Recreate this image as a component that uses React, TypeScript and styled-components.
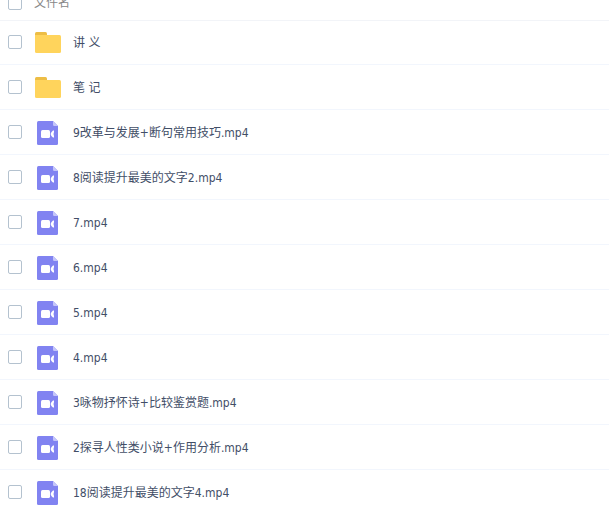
import React from "react";
import styled, { createGlobalStyle } from "styled-components";

const GlobalStyle = createGlobalStyle`
  *, *::before, *::after { box-sizing: border-box; }
  body {
    margin: 0;
    background: #fff;
    color: #424e67;
    font: 12px/18px "DejaVu Sans Condensed", "Noto Sans", "Noto Sans CJK SC", sans-serif;
  }
`;

const Viewport = styled.main`
  height: 100vh;
  overflow: hidden;
`;

const FileTable = styled.table`
  width: 100%;
  margin-top: -15px;
  border-collapse: separate;
  border-spacing: 0;
  table-layout: fixed;
`;

const HeadCell = styled.th<{ $check?: boolean }>`
  width: ${(p) => (p.$check ? "34px" : "auto")};
  height: 36px;
  padding: ${(p) => (p.$check ? "0 0 0 8px" : "0")};
  border-bottom: 1px solid #f2f4f8;
  color: #888;
  font-weight: 400;
  text-align: left;
  vertical-align: middle;
`;

const Cell = styled.td<{ $check?: boolean }>`
  height: 45px;
  padding: ${(p) => (p.$check ? "0 0 0 8px" : "0 8px 0 1px")};
  border-bottom: 1px solid #f2f6fd;
  vertical-align: middle;

  tr:first-child > & {
    height: 44px;
    padding-bottom: 1px;
  }
`;

const Checkbox = styled.input`
  display: block;
  appearance: none;
  width: 14px;
  height: 14px;
  margin: 0;
  border: 1px solid #b4c2cf;
  border-radius: 2px;
  background: #fff;

  &:checked {
    border-color: #8183f1;
    background: #8183f1;
  }
`;

const FileLabel = styled.label`
  display: flex;
  align-items: center;
  gap: 12px;
`;

const FileName = styled.span`
  padding-top: 2px;
`;

const Icon = styled.svg`
  display: block;
  flex: none;
  width: 26px;
  height: 26px;
`;

const FolderIcon = () => (
  <Icon viewBox="0 0 26 26" aria-hidden="true">
    <path d="M0 12V4.5Q0 3 1.5 3H10.5Q12 3 12 4.5V12Z" fill="#edbd45" />
    <path d="M0 6H24.5Q26 6 26 7.5V22.5Q26 24 24.5 24H1.5Q0 24 0 22.5Z" fill="#ffd45c" />
  </Icon>
);

const VideoIcon = () => (
  <Icon viewBox="0 0 26 26" aria-hidden="true">
    <path d="M3.5 2H18L23 7V24.5Q23 26 21.5 26H3.5Q2 26 2 24.5V3.5Q2 2 3.5 2Z" fill="#8183f1" />
    <path d="M18 2L23 7H19.2Q18 7 18 5.8Z" fill="#c4c5fa" />
    <rect x="6" y="11" width="9" height="8" rx="1.5" fill="#fff" />
    <path d="M15.6 15Q16 13 18 11.5H19V13L18.5 15L19 17V18.5H18Q16 17 15.6 15Z" fill="#fff" />
  </Icon>
);

type Entry = { name: string; folder?: boolean };

const entries: Entry[] = [
  { name: "讲 义", folder: true },
  { name: "笔 记", folder: true },
  { name: "9改革与发展+断句常用技巧.mp4" },
  { name: "8阅读提升最美的文字2.mp4" },
  { name: "7.mp4" },
  { name: "6.mp4" },
  { name: "5.mp4" },
  { name: "4.mp4" },
  { name: "3咏物抒怀诗+比较鉴赏题.mp4" },
  { name: "2探寻人性类小说+作用分析.mp4" },
  { name: "18阅读提升最美的文字4.mp4" },
];

export default function App() {
  return (
    <Viewport lang="zh-CN">
      <GlobalStyle />
      <FileTable>
        <thead>
          <tr>
            <HeadCell $check>
              <Checkbox type="checkbox" id="file-all" />
            </HeadCell>
            <HeadCell>
              <label htmlFor="file-all">文件名</label>
            </HeadCell>
          </tr>
        </thead>
        <tbody>
          {entries.map((entry, i) => (
            <tr key={entry.name}>
              <Cell $check>
                <Checkbox type="checkbox" id={`file-${i}`} />
              </Cell>
              <Cell>
                <FileLabel htmlFor={`file-${i}`}>
                  {entry.folder ? <FolderIcon /> : <VideoIcon />}
                  <FileName>{entry.name}</FileName>
                </FileLabel>
              </Cell>
            </tr>
          ))}
        </tbody>
      </FileTable>
    </Viewport>
  );
}
